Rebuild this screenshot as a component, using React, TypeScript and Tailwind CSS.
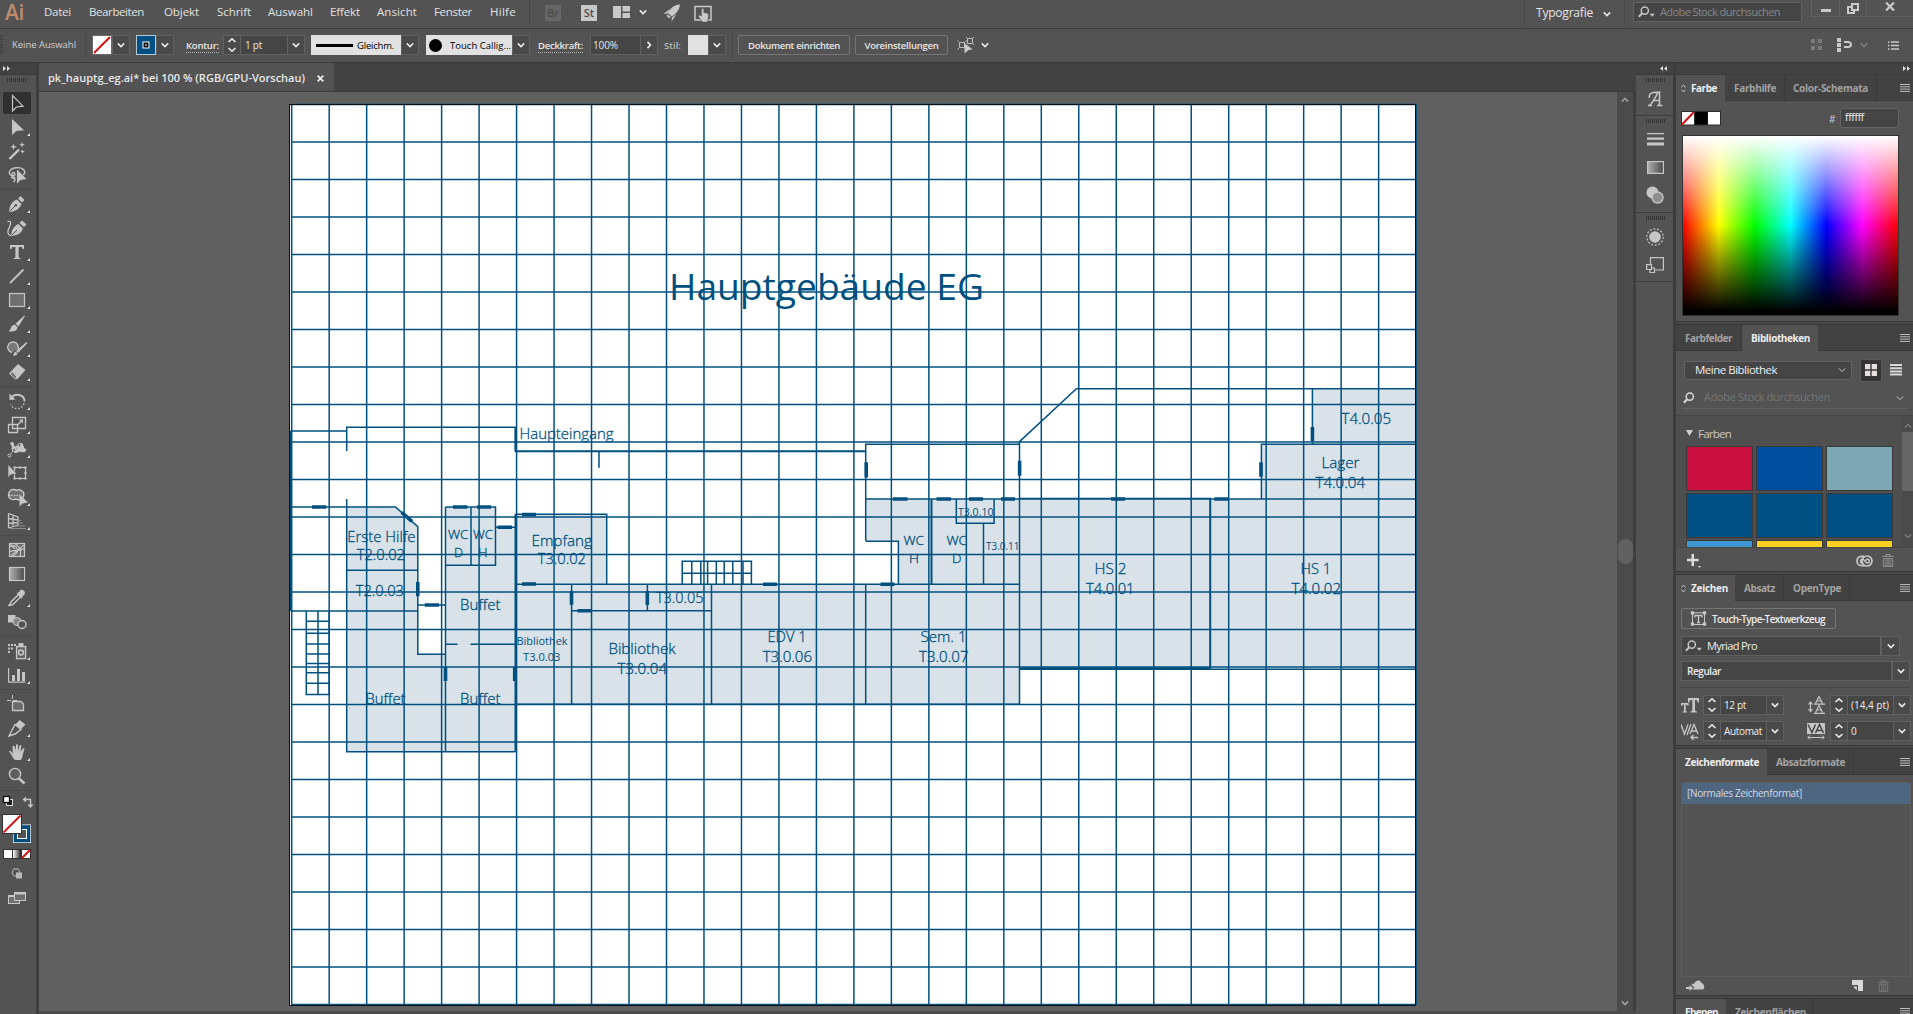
import React, { useLayoutEffect, useRef, useState } from "react";

const INK = "#00507f";

/** Single line of text whose tracking is adjusted so that it fills a given width. */
function Label({ w, children, className = "" }: { w: number; children: string; className?: string }) {
  const ref = useRef<HTMLSpanElement>(null);
  const [tracking, setTracking] = useState(0);
  useLayoutEffect(() => {
    const natural = ref.current!.getBoundingClientRect().width;
    setTracking((w - natural) / children.length);
  }, [w, children]);
  return (
    <span className={"block shrink-0 whitespace-nowrap " + className} style={{ width: w }}>
      <span ref={ref} style={{ letterSpacing: tracking }}>
        {children}
      </span>
    </span>
  );
}

function Chevron({ color = "#e8e8e8", s = 1.6, size = 8 }: { color?: string; s?: number; size?: number }) {
  return (
    <svg width={size} height={size} viewBox="0 0 8 8" fill="none" stroke={color} strokeWidth={s} className="shrink-0">
      <path d="M0.8 2.4 L4 5.6 L7.2 2.4" />
    </svg>
  );
}

function DropBtn({ className = "" }: { className?: string }) {
  return (
    <div className={"flex shrink-0 items-center justify-center border border-[#606060] bg-[#4a4a4a] " + className}>
      <Chevron />
    </div>
  );
}

function Stepper() {
  return (
    <div className="flex h-[20px] w-[18px] shrink-0 items-center justify-center border border-[#606060] bg-[#4a4a4a]">
      <svg width="10" height="16" viewBox="0 0 10 16" fill="none" stroke="#e8e8e8" strokeWidth="1.6">
        <path d="M1.5 5 L5 1.8 L8.5 5 M1.5 11 L5 14.2 L8.5 11" />
      </svg>
    </div>
  );
}

function Grip() {
  return (
    <div className="h-[4px] w-[19px] bg-[repeating-linear-gradient(90deg,#343434_0_1px,#535353_1px_2px)]" />
  );
}

function MenuIcon() {
  return (
    <svg width="10" height="8" viewBox="0 0 10 8" className="shrink-0" stroke="#bdbdbd" strokeWidth="1">
      <path d="M0 .5H10M0 2.8H10M0 5.1H10M0 7.4H10" />
    </svg>
  );
}

function UpDown() {
  return (
    <svg width="5" height="9" viewBox="0 0 5 9" fill="none" stroke="#c4c4c4" strokeWidth="1" className="shrink-0">
      <path d="M.5 3.4 L2.5 1 L4.5 3.4 M.5 5.6 L2.5 8 L4.5 5.6" />
    </svg>
  );
}

function Search({ arrow = false, color = "#c4c4c4" }: { arrow?: boolean; color?: string }) {
  return (
    <svg width="17" height="12" viewBox="0 0 17 12" fill="none" stroke={color} strokeWidth="1.5" className="shrink-0">
      <circle cx="6.8" cy="4.6" r="3.6" />
      <path d="M4.2 7.2 L.8 10.8" strokeWidth="2" />
      {arrow && <path d="M11.5 7.8 H17 L14.2 10.8 Z" fill={color} stroke="none" />}
    </svg>
  );
}

/* ------------------------------------------------------------------ */
/* Menu bar and control bar                                            */
/* ------------------------------------------------------------------ */

const MENU: [string, number, number][] = [
  ["Datei", 27, 45],
  ["Bearbeiten", 55, 75],
  ["Objekt", 35, 53],
  ["Schrift", 34, 51],
  ["Auswahl", 45, 62],
  ["Effekt", 30, 47],
  ["Ansicht", 40, 57],
  ["Fenster", 38, 56],
  ["Hilfe", 26, 39],
];

function MenuBar() {
  return (
    <div className="flex h-[28px] shrink-0 items-start">
      <div className="w-[44px] pl-[5px] text-[21px] leading-[24px] font-semibold tracking-[-0.3px] text-[#c08c6e]">Ai</div>
      <div className="flex h-[24px] items-center text-[11.5px] text-[#e2e2e2]">
        {MENU.map(([t, w, cell]) => (
          <div key={t} style={{ width: cell }}>
            <Label w={w}>{t}</Label>
          </div>
        ))}
      </div>
      <div className="h-[24px] w-[16px] border-l border-[#484848]" />
      <div className="mt-[5px] flex h-[16px] w-[16px] items-center justify-center bg-[#666] text-[11px] font-semibold text-[#4c4c4c]">Br</div>
      <div className="mt-[5px] ml-[20px] flex h-[16px] w-[16px] items-center justify-center bg-[#c9c9c9] text-[11px] font-semibold text-[#4c4c4c]">St</div>
      <svg className="mt-[6px] ml-[16px]" width="17" height="12" viewBox="0 0 17 12" fill="#c9c9c9">
        <path d="M0 0H8V12H0ZM9.5 0H17V5.5H9.5ZM9.5 7H17V12H9.5Z" />
      </svg>
      <div className="mt-[8px] ml-[9px]">
        <Chevron />
      </div>
      <svg className="mt-[4px] ml-[16px]" width="18" height="18" viewBox="0 0 18 18" fill="#c9c9c9">
        <path d="M17 .5 C11 1 7.5 4 5 9 L8.600 12.600 C13 10 16.500 6 17 .5Z M7 4.800 L.5 10 L4.500 9.500 Z M13.300 10.500 L8.500 17.500 L9 13.200 Z M4.500 10 L8 13.400 L5.800 14 L4 12.200Z" />
      </svg>
      <svg className="mt-[5px] ml-[13px]" width="18" height="17" viewBox="0 0 18 17">
        <path d="M1 1.500H17V15H1Z" fill="none" stroke="#c9c9c9" strokeWidth="1.500" />
        <path d="M7.500 4.500 C7.500 3 9.800 3 9.800 4.500 V7.500 L14 8.500 C14.800 8.800 14.700 11 14 14 L13.500 17 H8.500 L4.500 11.500 C4.300 9.800 6 9.800 7.500 11.200Z" fill="#c9c9c9" stroke="#535353" strokeWidth=".5" />
      </svg>
      <div className="grow" />
      <div className="flex h-[25px] w-[109px] shrink-0 items-center border-l border-[#484848] pl-[11px] text-[12px] text-[#e2e2e2]">
        <Label w={57}>Typografie</Label>
        <div className="mt-[3px] ml-[10px]">
          <Chevron />
        </div>
        <div className="ml-[13px] h-[24px] w-px bg-[#484848]" />
      </div>
      <div className="mt-[2px] flex h-[20px] w-[169px] shrink-0 items-center rounded-[2px] border border-[#636363] bg-[#454545] pl-[4px] text-[11px] text-[#858585]">
        <Search arrow />
        <Label w={120} className="ml-[5px]">Adobe Stock durchsuchen</Label>
      </div>
      <div className="ml-[9px] flex h-[17px] w-[102px] shrink-0 border-b border-l border-[#606060]">
        <div className="flex w-[28px] items-end justify-center border-r border-[#606060] pb-[4px]">
          <div className="h-[3px] w-[10px] bg-[#c9c9c9]" />
        </div>
        <div className="flex w-[27px] items-center justify-center border-r border-[#606060]">
          <svg width="12" height="11" viewBox="0 0 12 11" fill="none" stroke="#c9c9c9" strokeWidth="2">
            <path d="M5 1H11V7H5ZM4 4H1V10H7V8" />
          </svg>
        </div>
        <div className="flex grow items-center justify-center pb-[3px]">
          <svg width="10" height="9" viewBox="0 0 10 9" stroke="#c9c9c9" strokeWidth="2.200">
            <path d="M1 .5 L9 8.500 M9 .5 L1 8.500" />
          </svg>
        </div>
      </div>
    </div>
  );
}

function ControlBar() {
  return (
    <div className="flex h-[34px] shrink-0 items-center border-t border-[#3d3d3d] pb-[1px] text-[9.5px] text-[#e8e8e8]">
      <div className="h-[20px] w-[3px] shrink-0 bg-[repeating-linear-gradient(180deg,#3e3e3e_0_1px,#535353_1px_2px)]" />
      <Label w={64} className="ml-[9px] text-[9.5px] text-[#d0d0d0]">Keine Auswahl</Label>
      <div className="ml-[9px] h-[26px] w-px bg-[#484848]" />
      <svg width="20" height="20" viewBox="0 0 20 20" className="ml-[6px] shrink-0">
        <rect x=".5" y=".5" width="19" height="19" fill="#fff" stroke="#6a6a6a" />
        <path d="M2 18 L18 2" stroke="#cf1111" strokeWidth="2" />
      </svg>
      <DropBtn className="h-[20px] w-[18px]" />
      <svg width="20" height="20" viewBox="0 0 20 20" className="ml-[6px] shrink-0">
        <rect x=".5" y=".5" width="19" height="19" fill="#005083" stroke="#b5c9d6" />
        <rect x="7" y="7" width="6" height="6" fill="#111" stroke="#fff" />
        <path d="M9 10H11" stroke="#fff" />
      </svg>
      <DropBtn className="h-[20px] w-[18px]" />
      <div className="mt-[3px] ml-[12px] border-b border-dotted border-[#b5b5b5]">
        <Label w={33} className="leading-[12px] font-semibold">Kontur:</Label>
      </div>
      <div className="ml-[4px] flex">
        <Stepper />
        <div className="flex h-[20px] w-[46px] items-center border-y border-[#606060] bg-[#454545] pl-[4px]">
          <Label w={17} className="text-[10px]">1 pt</Label>
        </div>
        <DropBtn className="h-[20px] w-[18px]" />
      </div>
      <div className="ml-[6px] flex h-[20px] w-[90px] shrink-0 items-center bg-[#e1e1e1] text-black">
        <div className="ml-[5px] h-[3px] w-[37px] bg-black" />
        <Label w={37} className="mt-[3px] ml-[4px] font-medium">Gleichm.</Label>
      </div>
      <DropBtn className="h-[20px] w-[18px]" />
      <div className="ml-[7px] flex h-[20px] w-[86px] shrink-0 items-center bg-[#e1e1e1] text-black">
        <div className="ml-[3px] h-[13px] w-[13px] rounded-full bg-black" />
        <Label w={61} className="mt-[3px] ml-[8px] font-medium">Touch Callig...</Label>
      </div>
      <DropBtn className="h-[20px] w-[18px]" />
      <div className="mt-[3px] ml-[8px] border-b border-dotted border-[#b5b5b5]">
        <Label w={45} className="leading-[12px] font-semibold">Deckkraft:</Label>
      </div>
      <div className="ml-[7px] flex">
        <div className="flex h-[20px] w-[51px] items-center border border-[#606060] bg-[#454545] pl-[2px]">
          <Label w={25} className="text-[10px]">100%</Label>
        </div>
        <div className="flex h-[20px] w-[17px] items-center justify-center border border-l-0 border-[#606060] bg-[#4a4a4a]">
          <svg width="6" height="8" viewBox="0 0 6 8" fill="none" stroke="#e8e8e8" strokeWidth="1.700">
            <path d="M1.500 .8 L4.500 4 L1.500 7.200" />
          </svg>
        </div>
      </div>
      <Label w={17} className="mt-[2px] ml-[6px] font-semibold text-[#bdbdbd]">Stil:</Label>
      <div className="ml-[7px] h-[20px] w-[20px] shrink-0 bg-[#e1e1e1]" />
      <DropBtn className="h-[20px] w-[18px]" />
      <div className="ml-[6px] h-[26px] w-px bg-[#484848]" />
      <div className="ml-[5px] flex h-[20px] w-[112px] shrink-0 items-center justify-center rounded-[2px] border border-[#757575] pt-[2px]">
        <Label w={92} className="font-semibold">Dokument einrichten</Label>
      </div>
      <div className="ml-[5px] flex h-[20px] w-[93px] shrink-0 items-center justify-center rounded-[2px] border border-[#757575] pt-[2px]">
        <Label w={74} className="font-semibold">Voreinstellungen</Label>
      </div>
      <svg className="ml-[9px] shrink-0" width="18" height="18" viewBox="0 0 18 18" fill="none" stroke="#bdbdbd">
        <path d="M2.500 6.500H7.500V11.500H2.500ZM.5 4.500L2.500 6.500M.5 13.500L2.500 11.500M7.500 6.500L9.500 4.500M10.500 2.500H15.500V7.500H10.500ZM9 1L10.500 2.500M17 1L15.500 2.500M17 9L15.500 7.500" />
        <path d="M7.500 7 L15.500 13.500 L11.500 14 L7.500 17.500Z" fill="#c9c9c9" stroke="none" />
      </svg>
      <div className="ml-[6px]">
        <Chevron />
      </div>
      <div className="grow" />
      <svg className="mr-[14px] shrink-0" width="12" height="12" viewBox="0 0 12 12" fill="#7b7b7b">
        <path d="M0 0H4V4H0ZM7 0H11V4H7ZM0 7H4V11H0ZM7 7H11V11H7Z" />
        <path d="M0 5.500H12M5.500 0V12" stroke="#6a6a6a" strokeDasharray="1 1" />
      </svg>
      <svg className="mr-[8px] shrink-0" width="15" height="14" viewBox="0 0 15 14">
        <path d="M0 0H4V4H0ZM0 5H4V9H0ZM0 10H4V14H0Z" fill="#c9c9c9" />
        <path d="M7 4H11C15 4 15 9 11 9H7" stroke="#c9c9c9" strokeWidth="2" fill="none" />
      </svg>
      <div className="mr-[20px]">
        <Chevron color="#7b7b7b" />
      </div>
      <svg className="mr-[14px] shrink-0" width="11" height="9" viewBox="0 0 11 9" stroke="#c9c9c9" strokeWidth="1.500">
        <path d="M3 1H11M3 4.500H11M3 8H11M0 1H1.500M0 4.500H1.500M0 8H1.500" />
      </svg>
    </div>
  );
}

/* ------------------------------------------------------------------ */
/* Tool bar                                                            */
/* ------------------------------------------------------------------ */

const C = "#c6c6c6";
const TOOLS: { icon: React.ReactNode; more?: boolean; active?: boolean }[][] = [
  [
    { active: true, icon: <path d="M12.500 4.500 V20 L16.500 16 L23 15.200 Z" fill="none" stroke={C} strokeWidth="1.200" /> },
    { more: true, icon: <path d="M12 4 V20 L16.500 16 L24 15.200 Z" fill={C} /> },
    {
      icon: (
        <g fill={C}>
          <path d="M9.500 20 L19 10.500" stroke={C} strokeWidth="2.400" />
          <path d="M13.500 4.500 L14.400 6.900 L16.800 7.800 L14.400 8.700 L13.500 11.100 L12.600 8.700 L10.200 7.800 L12.600 6.900ZM22 3 L22.800 5 L25 5.800 L22.800 6.600 L22 8.800 L21.200 6.600 L19.200 5.800 L21.200 5ZM22.500 10.500 L23.200 12 L24.800 12.600 L23.200 13.200 L22.500 14.800 L21.800 13.200 L20.200 12.600 L21.800 12Z" />
        </g>
      ),
    },
    {
      icon: (
        <g>
          <path d="M14.500 12.500 C10 13.500 8.500 10 9.800 8 C12 4 21 3.500 24 7 C25.200 9 24.500 11 23 12 M14.500 12.500 C16 9.500 12.500 8.500 12 11 C12 13.500 15.500 14 15 17 L13.500 19 M11 14 L14 15.500" fill="none" stroke={C} strokeWidth="1.400" />
          <path d="M17 6.500 V20.500 L20.500 17 L26.500 16Z" fill={C} />
        </g>
      ),
    },
  ],
  [
    {
      more: true,
      icon: (
        <g>
          <path d="M9 20 C9.500 13 12 9.500 17 7.500 L21.500 12 C19.500 17 16 19.500 9 20Z M18 6.500 L20.500 4 L24.500 8 L22 10.500Z" fill={C} />
          <path d="M9.500 19.500 L15.500 13.500" stroke="#535353" />
          <circle cx="15.800" cy="13.200" r="1.200" fill="#535353" />
        </g>
      ),
    },
    {
      icon: (
        <g>
          <path d="M11 20 C11.500 13.500 14 10 18.500 8 L23 12.500 C21 17.500 17.500 19.500 11 20Z M19.500 7 L22 4.500 L26.500 8.500 L24 11Z" fill={C} />
          <path d="M11.500 19.500 L17 14" stroke="#535353" />
          <path d="M7.500 5.500 C14 4 8.500 12 8 15 C7.500 18 9 19.500 11 19.500" fill="none" stroke={C} strokeWidth="1.300" />
        </g>
      ),
    },
    { more: true, icon: <path d="M10 5 H24 V9 H22.500 C22.400 7.500 22 7 20.500 7 H18.600 V17 C18.600 17.700 19 17.900 20.500 18 V19 H13.500 V18 C15 17.900 15.400 17.700 15.400 17 V7 H13.500 C12 7 11.600 7.500 11.500 9 H10Z" fill={C} /> },
    { more: true, icon: <path d="M10 19 L23.500 5.500" stroke={C} strokeWidth="1.800" /> },
    { more: true, icon: <rect x="9.500" y="5.500" width="15" height="13" fill="#707070" stroke={C} strokeWidth="1.200" /> },
    { more: true, icon: <path d="M25 4 L18.500 14.500 L15.500 11.800 L24 3.800Z M14.800 12.500 L17.500 15 C17.500 18.500 14.500 20 8.500 19.500 C11 18 10.500 13 14.800 12.500Z" fill={C} /> },
    {
      more: true,
      icon: (
        <g>
          <path d="M12 16.500 A5.300 5.300 0 1 1 18 13" fill="#7a7a7a" stroke={C} strokeWidth="1.300" />
          <path d="M27.500 7 L18 17 L16 15 L26.500 6Z M15.500 15.500 L17.500 17.500 C16.500 19.500 14.500 20 13 19.500 C14 18.500 13.500 16.500 15.500 15.500Z" fill={C} />
        </g>
      ),
    },
    {
      more: true,
      icon: (
        <g>
          <path d="M9 13.500 L18 4 L25.500 10 L17 19.500Z" fill={C} />
          <path d="M10 14 L12.500 11.800 L17 17 L15.500 19Z" fill="#707070" stroke={C} />
        </g>
      ),
    },
  ],
  [
    {
      more: true,
      icon: (
        <g fill="none" stroke={C} strokeWidth="1.800">
          <path d="M11.500 8.500 C15 4 24.500 5 24.500 12.500" />
          <path d="M24 14.500 C22.500 20.500 13.500 21.500 10.500 15.500" strokeDasharray="1.500 1.800" strokeWidth="1.400" />
          <path d="M9.500 4.500 V11 L15.500 10.500Z" fill={C} stroke="none" />
        </g>
      ),
    },
    {
      more: true,
      icon: (
        <g fill="none" stroke={C} strokeWidth="1.300">
          <path d="M12.500 4.500H25.500V15.500H12.500ZM8.500 11.500H17.500V19.500H8.500Z M18 11.500L22 7.500" />
          <path d="M19 6.500H23V10.500Z" fill={C} stroke="none" />
        </g>
      ),
    },
    {
      more: true,
      icon: (
        <g>
          <path d="M10 7 C11 3.500 14.500 5 14 8 C15.500 12 18.500 6 21 6 C24.500 6 22 10.500 26.500 12.500 C25 17.500 21 14 19 15 C15 17.500 12.500 15.500 11.500 12 C12.500 9.500 11.500 8 10 7Z" fill={C} />
          <path d="M9 20 L13 14 L19 9" stroke={C} />
          <g fill="#535353" stroke={C}>
            <circle cx="9.500" cy="18.500" r="1.500" />
            <circle cx="14" cy="13" r="1.500" />
            <circle cx="19.500" cy="8" r="1.500" />
          </g>
        </g>
      ),
    },
    {
      icon: (
        <g>
          <rect x="14.500" y="6.500" width="11" height="11" fill="none" stroke={C} strokeWidth="1.200" />
          <path d="M13.500 5.500h2v2h-2zM19 5.500h2v2h-2zM24.500 5.500h2v2h-2zM24.500 11h2v2h-2zM24.500 16.500h2v2h-2zM19 16.500h2v2h-2zM13.500 16.500h2v2h-2z" fill={C} />
          <path d="M8 3.500 V16.500 L11 13.500 L17 13Z" fill={C} stroke="#535353" strokeWidth=".6" />
        </g>
      ),
    },
    {
      more: true,
      icon: (
        <g>
          <path d="M13 4.500 C15 4.500 16 5 16.500 5.500 C20 3.500 24.500 6.500 23.800 10.500 C23 15 18.500 15.500 16 14 C12 15.800 8.500 13.500 8.500 10 C8.500 7 10.500 4.500 13 4.500Z" fill="#707070" stroke={C} strokeWidth="1.400" />
          <path d="M9 10.500H20" stroke={C} strokeWidth="1.500" strokeDasharray="1.500 1" />
          <path d="M19.500 9.500 V21.500 L22.500 18.500 L28 17.500Z" fill={C} />
        </g>
      ),
    },
    {
      more: true,
      icon: (
        <g fill="none" stroke={C}>
          <path d="M8.500 4.500V19 M8.500 4.500 L18 8 V16 L8.500 19 M13 6.500V17.500 M8.500 9.500 L18 11 M8.500 14.500 L18 13.500" strokeWidth="1.300" />
          <path d="M18 11.500H21M17 14H23M12 17H25M9 19.500H26" stroke="#8a8a8a" />
        </g>
      ),
    },
  ],
  [
    {
      icon: (
        <g fill="none" stroke={C} strokeWidth="1.200">
          <rect x="9.500" y="5.500" width="15" height="13" fill="#656565" />
          <path d="M9.500 9C13 6 17 8 17.500 12S14 17 12.500 18.500M15 5.500C18 8 22 10 20 18.500M9.500 14C14 11 20 14 24.500 10M10 6L15 11M24 7L18 12L11 17.500" />
        </g>
      ),
    },
    { icon: <rect x="9.500" y="5.500" width="15" height="13" fill="url(#tool-grad)" stroke={C} strokeWidth="1.200" /> },
    {
      more: true,
      icon: (
        <g>
          <path d="M19 8 L11 16 C10.500 18 9.500 18.500 9 19.500 C11.500 19.500 12.500 19 13.500 18 L21 10.500" fill="none" stroke={C} strokeWidth="1.500" />
          <path d="M16.500 7 L18.500 6.500 L20.500 4 C23 3 26 5.500 24.500 8.500 L22.500 10.500 L22 12.500 L20.500 12Z" fill={C} />
        </g>
      ),
    },
    {
      icon: (
        <g>
          <path d="M8 5H15.500V12.500H8Z" fill={C} />
          <circle cx="17" cy="11.500" r="4" fill="#858585" stroke={C} />
          <circle cx="22" cy="14.500" r="4" fill="#535353" stroke={C} strokeWidth="1.400" />
        </g>
      ),
    },
  ],
  [
    {
      more: true,
      icon: (
        <g>
          <path d="M8 5h2v2h-2zM11 5h2v2h-2zM14 5h2v2h-2zM8 8.500h2v2h-2zM11 8.500h2v2h-2zM8 12h2v2h-2zM18.500 4H23.500V7H18.500Z" fill={C} />
          <rect x="16.600" y="7.600" width="9" height="12" fill="#606060" stroke={C} strokeWidth="1.400" />
          <circle cx="21" cy="13.500" r="2.400" fill="none" stroke={C} strokeWidth="1.600" />
        </g>
      ),
    },
    { more: true, icon: <path d="M8 5H9.200V18.500H25.500V19.700H8Z M12 12H15V18H12ZM17 6H20V18H17ZM22 9H25V18H22Z" fill={C} /> },
  ],
  [
    {
      icon: (
        <g fill="none" stroke={C}>
          <path d="M12.500 3V7M12.500 9V11M7 8.500H11M13 8.500H17" />
          <path d="M12.500 9.500H21L23.500 12V18.500H12.500Z" fill="#6a6a6a" strokeWidth="1.300" />
        </g>
      ),
    },
    {
      more: true,
      icon: (
        <g>
          <path d="M9 20 L15 8.500 L21 13.500 L15 18 Z" fill="none" stroke={C} strokeWidth="1.400" />
          <path d="M15.500 8.500 L19.500 4 L25.500 8.500 L21 13Z" fill={C} />
        </g>
      ),
    },
    { more: true, icon: <path d="M9 11 C10.500 10 12 12 13 14 L12.500 6.500 C13.200 5.200 14.500 5.500 14.700 6.500 L15.500 11 L16 5 C16.500 3.800 17.900 3.900 18 5 L18.200 11 L19.600 5.500 C20.200 4.600 21.400 5 21.300 6 L20.600 12 L22.800 8.500 C23.800 7.800 24.700 8.500 24.300 9.500 C22.500 14 22.500 19.500 20.500 20 H15 C13 18.500 11 14 9 11Z" fill={C} /> },
    {
      icon: (
        <g fill="none" stroke={C}>
          <circle cx="15" cy="10" r="5.600" strokeWidth="1.400" fill="#606060" />
          <path d="M19 14.500 L24.500 19.500" strokeWidth="2.600" />
        </g>
      ),
    },
  ],
];

function Separator() {
  return (
    <div className="flex h-[5px] w-full items-center">
      <div className="h-px w-[32px] bg-[#4a4a4a]" />
    </div>
  );
}

function ToolBar() {
  return (
    <div className="flex w-[39px] shrink-0 flex-col border-r-[3px] border-[#3e3e3e]">
      <svg className="h-0 w-0">
        <defs>
          <linearGradient id="tool-grad">
            <stop offset="0" stopColor="#b0b0b0" />
            <stop offset="1" stopColor="#4a4a4a" />
          </linearGradient>
        </defs>
      </svg>
      <div className="flex h-[12px] items-center border-b border-[#3a3a3a] bg-[#424242] pl-[3px]">
        <svg width="7" height="5" viewBox="0 0 7 5" fill="#e0e0e0">
          <path d="M0 0L3 2.500L0 5ZM4 0L7 2.500L4 5Z" />
        </svg>
      </div>
      <div className="mt-[3px] mb-[9px] pl-[7px]">
        <Grip />
      </div>
      {TOOLS.map((group, gi) => (
        <React.Fragment key={gi}>
          {group.map((t, i) => (
            <div key={i} className="flex h-[24px]">
              <svg width="36" height="24" viewBox="0 0 36 24">
                {t.active && <rect x="3" y="1" width="28" height="22" rx="2" fill="#303030" />}
                {t.icon}
                {t.more && <path d="M30 18V21H27Z" fill="#e0e0e0" />}
              </svg>
            </div>
          ))}
          <Separator />
        </React.Fragment>
      ))}
      <svg width="36" height="18" viewBox="0 0 36 18" className="mt-[-1px]">
        <rect x="6.500" y="7.500" width="6" height="6" fill="#222" stroke="#ddd" />
        <rect x="3.500" y="4.500" width="6" height="6" fill="#fff" stroke="#111" strokeWidth="1.300" />
        <path d="M25.500 7.500H30.500V13" fill="none" stroke={C} strokeWidth="1.400" />
        <path d="M26 4.500V10.500L22.500 7.500ZM27.500 12.500H33.500L30.500 16Z" fill={C} />
      </svg>
      <svg width="36" height="34" viewBox="0 0 36 34" className="mt-px">
        <rect x="13" y="13.500" width="18" height="18.500" fill="#fff" />
        <rect x="14" y="14.500" width="16" height="16.500" fill="#005083" stroke="#00375a" strokeWidth=".6" />
        <rect x="17.500" y="18.500" width="9" height="9" fill="#535353" stroke="#fff" />
        <rect x="2.500" y="3.500" width="19" height="19" fill="#fff" stroke="#333" />
        <path d="M3.500 21.500 L20.500 4.500" stroke="#cf1111" strokeWidth="1.800" />
      </svg>
      <svg width="36" height="10" viewBox="0 0 36 10" className="mt-[4px]">
        <rect x="3" y="0" width="28" height="10" fill="#333" />
        <rect x="4" y="1" width="8" height="8" fill="#fff" />
        <rect x="13" y="1" width="8" height="8" fill="url(#mini-grad)" />
        <rect x="22" y="1" width="8" height="8" fill="#fff" />
        <path d="M22 9L30 1" stroke="#cf1111" strokeWidth="2" />
        <defs>
          <linearGradient id="mini-grad">
            <stop offset="0" stopColor="#fff" />
            <stop offset="1" stopColor="#222" />
          </linearGradient>
        </defs>
      </svg>
      <svg width="36" height="14" viewBox="0 0 36 14" className="mt-[8px]">
        <circle cx="16" cy="5.500" r="3.700" fill="none" stroke="#9d9d9d" strokeWidth="1.400" />
        <rect x="16" y="5.500" width="6" height="6" fill="#b9b9b9" />
      </svg>
      <svg width="36" height="14" viewBox="0 0 36 14" className="mt-[10px]">
        <rect x="8.500" y="4.500" width="11" height="8" fill="#6f6f6f" stroke={C} />
        <rect x="14.500" y="1.500" width="11" height="8" fill="#6f6f6f" stroke={C} />
        <path d="M14 1H26V3.500H14ZM8 4H14V6H8Z" fill={C} />
      </svg>
    </div>
  );
}

/* ------------------------------------------------------------------ */
/* Drawing on the artboard                                             */
/* ------------------------------------------------------------------ */

const GRID = 37.5;
const GX = 291.7;
const GY = 104.3;

/* text, left, right, baseline, font size, weight */
const PLAN_LABELS: [string, number, number, number, number, number][] = [
  ["Haupteingang", 519.500, 613.500, 439, 15, 300],
  ["Erste Hilfe", 347.300, 415.500, 541.700, 15, 300],
  ["T2.0.02", 356.700, 405, 560.300, 15, 300],
  ["T2.0.03", 355.700, 404, 596, 15, 300],
  ["WC", 448, 468.500, 539.300, 12.600, 300],
  ["D", 454, 463, 557.300, 12.600, 300],
  ["WC", 473, 493, 539.300, 12.600, 300],
  ["H", 478, 487.500, 557.300, 12.600, 300],
  ["Empfang", 531.500, 592, 546, 15, 300],
  ["T3.0.02", 537.700, 586, 564, 15, 300],
  ["Buffet", 460, 500.500, 610, 15, 300],
  ["Buffet", 460, 500.500, 703.700, 15, 300],
  ["Buffet", 365.500, 405.500, 703.700, 15, 300],
  ["Bibliothek", 516.500, 567.500, 645, 11, 400],
  ["T3.0.03", 523, 560.500, 661, 11, 400],
  ["Bibliothek", 608.500, 675.500, 654, 15, 300],
  ["T3.0.04", 617.500, 667, 674, 15, 300],
  ["T3.0.05", 656, 703.500, 603, 15, 300],
  ["EDV 1", 767.500, 806.500, 642.300, 15, 300],
  ["T3.0.06", 762.700, 812, 661.700, 15, 300],
  ["Sem. 1", 920.500, 966.500, 642.300, 15, 300],
  ["T3.0.07", 919, 968.500, 661.700, 15, 300],
  ["WC", 903.500, 924, 545.300, 12.600, 300],
  ["H", 909, 919, 563.300, 12.600, 300],
  ["WC", 946.500, 967, 545.300, 12.600, 300],
  ["D", 952, 961.500, 563.300, 12.600, 300],
  ["T3.0.10", 958, 993.500, 516, 10.500, 400],
  ["T3.0.11", 986, 1019.500, 550.300, 10, 400],
  ["HS 2", 1094.500, 1126.500, 574, 15, 300],
  ["T4.0.01", 1086, 1134.500, 594, 15, 300],
  ["HS 1", 1300.500, 1331, 574, 15, 300],
  ["T4.0.02", 1291.500, 1341, 594, 15, 300],
  ["Lager", 1321.500, 1359.500, 468, 15, 300],
  ["T4.0.04", 1315.500, 1365, 488, 15, 300],
  ["T4.0.05", 1341.500, 1391, 424.300, 15, 300],
  ["Hauptgebäude EG", 669, 984, 300, 36, 400],
];

function Artboard() {
  return (
    <svg width="1578" height="919" viewBox="39 92 1578 919" className="block shrink-0">
      <rect x="289.500" y="104.500" width="1126" height="901" fill="#fff" stroke="#000" />
      <g fill="#d8e2e8">
        <path d="M346.700 507H395.500L417.800 526.700V654.300H445.500V751.700H346.700Z" />
        <path d="M445.500 507H495.500V527.300H515.500V751.700H445.500Z" />
        <path d="M515.500 514.300H606.700V584H898.400V541.200H865.700V499H1261.400V444.300H1312.400V388.700H1415.500V669H1019.500V704.300H515.500Z" />
      </g>
      <g fill="none" stroke={INK} strokeWidth="1.500">
        <path d="M290.700 431H346.700M346.700 451V427.300H515.300V451M346.700 499V751.700H515.500M445.500 507V751.700M346.700 570.300H417.800M291 611H417.800M291.500 507H395.500L417.800 526.700V654.300H445.500M417.800 605H445.500" />
        <path d="M445.500 565.300H495.500V507H445.500M471 507V565.300M495.500 527.300H515.500M445.500 644.300H457.500M470.500 644.300H515.500" />
        <path d="M515.500 514.300H606.700V584M515.500 584.200H1019.500M515.500 704.300H1019.500M571.600 584V704.300M571.600 610.700H711.400M647.400 584V610.700M711.500 584V704.300M865.700 584V704.300" />
        <path d="M599 451V467.700M865.700 541V444.300H1019.500M865.700 499H1019.500M865.700 541.200H898.400V584M956.300 499V523.300H994.100V499M983.500 523.300V584" />
        <path d="M1019.500 704.300V441.700L1076.400 388.700H1415M1312.400 388.700V444.300M1415 444.300H1261.400V499M1210 499H1415M1210 669.300H1415" />
        <path d="M306.300 611V694.500H329.200V611M318 611V694.500M306.300 621.300H329M306.300 633.300H329M306.300 644H329M306.300 654H329M306.300 663.500H329M306.300 672.700H329M306.300 683.300H329" />
        <path d="M682.200 584V561.300H751.400V584M682.200 573.300H751.400M691.800 561V584M700.800 561V584M707.600 561V584M716.300 561V584M724.200 561V584M732.800 561V584M743 561V584" />
      </g>
      <g fill="none" stroke={INK} strokeWidth="2">
        <path d="M291 431V611M515.700 427V451.300H865.700M515.500 514V751.700M931.500 499V584M1019.500 498.700H1210.200V668.500" />
        <path d="M1019.500 668.600H1210.200" strokeWidth="2.800" />
      </g>
      <path
        d="M312 507H326.300M401.700 512.300L412 521.300M417.800 582V596.300M424.800 605H439M453 507H467.400M477 507H491M497.500 527.300H512M445.500 667V681M514.700 667V681M522 514.500H536M522 584H536M571.500 591V604.700M577.500 610.700H591.500M647.300 591V605M763 584.200H777M880.500 584.200H894.600M893 499H907.500M936.600 499H951M969 499H983M1001 499H1015M866.200 462.300V477.500M1019.600 460.700V475.700M1312.400 427V441M1261 462.300V476.700M1111 499H1125M1214.400 499H1228.300"
        fill="none"
        stroke={INK}
        strokeWidth="3.600"
      />
      <g fill={INK} className="font-['Open_Sans']">
        {PLAN_LABELS.map(([t, x0, x1, y, size, weight], i) => (
          <text
            key={i}
            x={x0}
            y={y}
            fontSize={size}
            fontWeight={weight}
            stroke={INK}
            strokeWidth={weight === 300 ? 0.3 : 0}
            textLength={x1 - x0}
            lengthAdjust="spacingAndGlyphs"
          >
            {t}
          </text>
        ))}
      </g>
      <g stroke="#00507f" strokeWidth="1.500">
        {Array.from({ length: 31 }, (_, i) => (
          <line key={"v" + i} x1={GX + i * (GRID - 0.02)} x2={GX + i * (GRID - 0.02)} y1="104" y2="1005" />
        ))}
        {Array.from({ length: 25 }, (_, i) => (
          <line key={"h" + i} x1="291.500" x2="1416" y1={GY + i * GRID + 0.2} y2={GY + i * GRID + 0.2} />
        ))}
      </g>
      <path d="M289.500 1005.500V104.500H1415.500V1005.500H289.500" fill="none" stroke="#0a0f14" />
    </svg>
  );
}

function Document() {
  return (
    <div className="flex w-[1597px] shrink-0 flex-col">
      <div className="flex h-[29px] shrink-0 border-b border-[#3a3a3a] bg-[#424242]">
        <div className="flex h-[28px] w-[295px] items-center bg-[#535353] pt-[2px] pl-[9px] text-[11px] font-semibold text-[#e8e8e8]">
          <Label w={257}>pk_hauptg_eg.ai* bei 100 % (RGB/GPU-Vorschau)</Label>
          <svg className="ml-[12px]" width="7" height="7" viewBox="0 0 7 7" stroke="#e8e8e8" strokeWidth="1.900">
            <path d="M.7 .7L6.300 6.300M6.300 .7L.7 6.300" />
          </svg>
        </div>
      </div>
      <div className="flex h-[919px] shrink-0">
        <div className="w-[1578px] bg-[#606060]">
          <Artboard />
        </div>
        <div className="flex w-[16px] flex-col items-center justify-between bg-[#4b4b4b] py-[4px]">
          <svg width="8" height="8" viewBox="0 0 8 8" fill="none" stroke="#a0a0a0" strokeWidth="1.500">
            <path d="M.8 5.600L4 2.400L7.200 5.600" />
          </svg>
          <div className="mb-px h-[25px] w-[15px] rounded-full bg-[#616161]" />
          <Chevron color="#a0a0a0" />
        </div>
        <div className="w-[3px] bg-[#3e3e3e]" />
      </div>
      <div className="h-[3px] bg-[#4b4b4b]" />
    </div>
  );
}

/* ------------------------------------------------------------------ */
/* Icon dock                                                           */
/* ------------------------------------------------------------------ */

function IconDock() {
  return (
    <div className="flex w-[40px] shrink-0 flex-col border-r-[3px] border-[#3c3c3c]">
      <div className="flex h-[12px] items-center justify-end border-b border-[#3a3a3a] bg-[#424242] pr-[6px]">
        <svg width="7" height="5" viewBox="0 0 7 5" fill="#e0e0e0">
          <path d="M3 0L0 2.500L3 5ZM7 0L4 2.500L7 5Z" />
        </svg>
      </div>
      <div className="flex h-[41px] flex-col items-center border-b border-[#3e3e3e] pt-[3px] pl-px">
        <Grip />
        <svg className="mt-[9px]" width="17" height="16" viewBox="0 0 17 16" fill="none" stroke={C} strokeWidth="1.500">
          <path d="M2 14.500C5 14 9 5 11 1.500L12.500 1V14.500M10 14.500H15.500M1 14.500H5M6 9.500H13M2.500 7C1 2 6 1 11.500 1.200" />
        </svg>
      </div>
      <div className="flex h-[97px] flex-col items-center border-b border-[#3e3e3e] pt-[3px] pl-px">
        <Grip />
        <svg className="mt-[10px]" width="17" height="13" viewBox="0 0 17 13" fill={C}>
          <path d="M0 0H17V1.200H0ZM0 4.500H17V6.700H0ZM0 9.500H17V12.500H0Z" />
        </svg>
        <svg className="mt-[15px]" width="17" height="13" viewBox="0 0 17 13">
          <rect x=".6" y=".6" width="15.800" height="11.800" fill="url(#tool-grad)" stroke={C} strokeWidth="1.200" />
        </svg>
        <svg className="mt-[12px]" width="18" height="18" viewBox="0 0 18 18">
          <circle cx="6.500" cy="6.500" r="6" fill={C} />
          <circle cx="11.500" cy="11.500" r="5.500" fill="#8e8e8e" stroke={C} strokeWidth="1.400" />
        </svg>
      </div>
      <div className="flex h-[69px] flex-col items-center border-b border-[#3e3e3e] pt-[3px] pl-px">
        <Grip />
        <svg className="mt-[8px]" width="18" height="18" viewBox="0 0 18 18">
          <circle cx="9" cy="9" r="5.800" fill={C} />
          <circle cx="9" cy="9" r="8.200" fill="none" stroke={C} strokeWidth="1.200" strokeDasharray="2 1.680" />
        </svg>
        <svg className="mt-[11px]" width="18" height="17" viewBox="0 0 18 17" fill="none" stroke={C} strokeWidth="1.200">
          <path d="M4.500 7V.6H17.400V13H9.500M.6 7.600H5.500V12.500H.6ZM4 12.500V15.500H8.500V11H6" />
        </svg>
      </div>
    </div>
  );
}

/* ------------------------------------------------------------------ */
/* Panels                                                              */
/* ------------------------------------------------------------------ */

function Tab({ text, w, cell, pl, active = false, handle = false }: { text: string; w: number; cell: number; pl: number; active?: boolean; handle?: boolean }) {
  return (
    <div
      className={
        "flex h-[26px] shrink-0 items-center pt-px text-[10px] font-bold " +
        (active ? "bg-[#535353] text-[#ededed]" : "border-r border-b border-[#3a3a3a] text-[#a2a2a2]")
      }
      style={{ width: cell, paddingLeft: pl }}
    >
      {handle && (
        <div className="mr-[5px]">
          <UpDown />
        </div>
      )}
      <Label w={w}>{text}</Label>
    </div>
  );
}

function Tabs({ children }: { children: React.ReactNode }) {
  return (
    <div className="flex h-[26px] shrink-0 bg-[#424242]">
      {children}
      <div className="flex grow items-center justify-end border-b border-[#3a3a3a] pt-px pr-[3px]">
        <MenuIcon />
      </div>
    </div>
  );
}

function Gap() {
  return <div className="h-[4px] shrink-0 border-y border-[#383838] bg-[#474747]" />;
}

function ColorPanel() {
  return (
    <div className="flex h-[246px] shrink-0 flex-col">
      <Tabs>
        <Tab text="Farbe" w={26} cell={49} pl={5} active handle />
        <Tab text="Farbhilfe" w={42} cell={60} pl={9} />
        <Tab text="Color-Schemata" w={75} cell={92} pl={8} />
      </Tabs>
      <div className="mt-[7px] flex h-[20px] items-center pr-[14px] pl-[5px]">
        <svg width="40" height="15" viewBox="0 0 40 15">
          <rect width="40" height="14.500" fill="#2d2d2d" />
          <rect x="1" y="1" width="12" height="12.500" fill="#fff" />
          <path d="M1 13.500L13 1" stroke="#cf1111" strokeWidth="2" />
          <rect x="14" y="1" width="12.500" height="12.500" fill="#000" />
          <rect x="27" y="1" width="12" height="12.500" fill="#fff" />
        </svg>
        <div className="grow" />
        <Label w={7} className="mt-[2px] mr-[4px] text-[10px] text-[#d0d0d0]">#</Label>
        <div className="flex h-[20px] w-[59px] items-center rounded-[2px] border border-[#636363] bg-[#454545] pl-[4px] text-[10.5px] text-[#f0f0f0]">
          <Label w={19}>ffffff</Label>
        </div>
      </div>
      <div className="mt-[7px] ml-[6px] h-[181px] w-[217px] border border-[#333] bg-[linear-gradient(180deg,#fff_0%,rgba(255,255,255,0)_50%,rgba(0,0,0,0)_50%,#000_98%),linear-gradient(90deg,#f00_0%,#ff0_16.670%,#0f0_33.330%,#0ff_50%,#00f_66.670%,#f0f_83.330%,#f00_100%)]" />
    </div>
  );
}

function LibraryPanel() {
  return (
    <div className="flex h-[246px] shrink-0 flex-col">
      <Tabs>
        <Tab text="Farbfelder" w={47} cell={66} pl={9} />
        <Tab text="Bibliotheken" w={59} cell={76} pl={9} active />
      </Tabs>
      <div className="mt-[7px] flex h-[24px] items-center pl-[8px]">
        <div className="flex h-[19px] w-[168px] items-center justify-between rounded-[2px] border border-[#636363] bg-[#454545] pr-[5px] pl-[10px] text-[11.5px] text-[#efefef]">
          <Label w={82}>Meine Bibliothek</Label>
          <Chevron s={1} color="#c9c9c9" />
        </div>
        <div className="ml-[8px] flex h-[23px] w-[22px] items-center justify-center rounded-[2px] border border-[#5a5a5a] bg-[#353535]">
          <svg width="12" height="12" viewBox="0 0 12 12" fill="#e6dfe0">
            <path d="M0 0H5.300V5.300H0ZM6.700 0H12V5.300H6.700ZM0 6.700H5.300V12H0ZM6.700 6.700H12V12H6.700Z" />
          </svg>
        </div>
        <svg className="ml-[8px]" width="12" height="12" viewBox="0 0 12 12" fill="#d8d8d8">
          <path d="M0 0H12V2H0ZM0 3.200H12V5.200H0ZM0 6.400H12V8.400H0ZM0 9.600H12V11.600H0Z" />
        </svg>
      </div>
      <div className="mr-[5px] ml-[7px] flex h-[27px] items-center border-b border-[#606060] pt-[5px] pr-[4px]">
        <Search color="#d8d8d8" />
        <Label w={126} className="ml-[4px] text-[11px] text-[#757575]">Adobe Stock durchsuchen</Label>
        <div className="grow" />
        <Chevron s={1} color="#c9c9c9" />
      </div>
      <div className="mt-[6px] flex h-[132px] shrink-0 justify-between border-t border-[#464646] bg-[#4f4f4f]">
        <div className="overflow-hidden pl-[10px]">
          <div className="flex h-[29px] items-center gap-[5px] pt-[6px] text-[11.5px] text-[#c9c9c9]">
            <svg width="7" height="7" viewBox="0 0 7 7" fill="#d0d0d0">
              <path d="M0 0H7L3.500 6Z" />
            </svg>
            <Label w={33}>Farben</Label>
          </div>
          <div className="mt-px grid grid-cols-[67px_67px_67px] gap-x-[3px] gap-y-[2px]">
            <div className="h-[45px] border border-[#3a3a3a] bg-[#cb1141]" />
            <div className="h-[45px] border border-[#3a3a3a] bg-[#004f9f]" />
            <div className="h-[45px] border border-[#3a3a3a] bg-[#7ea8b4]" />
            <div className="h-[45px] border border-[#3a3a3a] bg-[#005083]" />
            <div className="h-[45px] border border-[#3a3a3a] bg-[#005083]" />
            <div className="h-[45px] border border-[#3a3a3a] bg-[#005083]" />
            <div className="h-[45px] border border-[#3a3a3a] bg-[#3d97d3]" />
            <div className="h-[45px] border border-[#3a3a3a] bg-[#fdd021]" />
            <div className="h-[45px] border border-[#3a3a3a] bg-[#fdd021]" />
          </div>
        </div>
        <div className="flex w-[11px] flex-col items-center bg-[#4b4b4b] pt-[6px]">
          <svg width="8" height="8" viewBox="0 0 8 8" fill="none" stroke="#a0a0a0">
            <path d="M.8 5.600L4 2.400L7.200 5.600" />
          </svg>
          <div className="mt-[2px] h-[59px] w-[11px] bg-[#666]" />
          <div className="mt-[41px]">
            <Chevron s={1} color="#a0a0a0" />
          </div>
        </div>
      </div>
      <div className="flex grow items-center border-t border-[#464646] pt-[2px] pl-[11px]">
        <svg width="14" height="14" viewBox="0 0 14 14" fill="#dcdcdc">
          <path d="M4.500 0H7V4.700H11.500V7.200H7V12H4.500V7.200H0V4.700H4.500ZM11 12H14L12.500 14Z" />
        </svg>
        <svg className="ml-[155px]" width="17" height="12" viewBox="0 0 17 12" fill="none" stroke="#c9c9c9" strokeWidth="1.700">
          <circle cx="11" cy="6" r="5" />
          <path d="M8 1.300H5.500C-.5 1.300 -.5 10.700 5.500 10.700H8" />
          <path d="M7 8C4 9 3.500 4.500 6.500 4.200C8.500 4.200 9 8 11.500 8C14 8 14 4.200 11.500 4.200C10.500 4.200 10 4.800 9.500 5.500" strokeWidth="1.400" />
        </svg>
        <svg className="ml-[9px]" width="12" height="13" viewBox="0 0 12 13" fill="none" stroke="#8a8a8a" strokeWidth="1.200">
          <path d="M0 2.500H12M4 2V.6H8V2M1.500 4.500H10.500V12.400H1.500ZM4 5V12M6 5V12M8 5V12" />
        </svg>
      </div>
    </div>
  );
}

function Field({ text, w }: { text: string; w: number }) {
  return (
    <div className="flex h-[20px] w-[45px] items-center overflow-hidden border-y border-[#606060] bg-[#454545] pl-[3px] text-[10px] text-[#ededed]">
      <Label w={w}>{text}</Label>
    </div>
  );
}

function CharacterPanel() {
  return (
    <div className="flex h-[170px] shrink-0 flex-col">
      <Tabs>
        <Tab text="Zeichen" w={37} cell={59} pl={5} active handle />
        <Tab text="Absatz" w={31} cell={49} pl={9} />
        <Tab text="OpenType" w={48} cell={66} pl={9} />
      </Tabs>
      <div className="mt-[7px] ml-[5px] flex h-[21px] w-[155px] shrink-0 items-center rounded-[2px] border border-[#757575] pl-[8px] text-[10px] font-semibold text-[#ededed]">
        <svg width="17" height="15" viewBox="0 0 17 15" fill="none" stroke={C}>
          <path d="M2.500 2V13M14.500 2V13M2.500 1.800H14.500M2.500 13.500H14.500" />
          <path d="M5 4.500H12M8.500 4.500V11.500M7 11.500H10M5 4V6.500M12 4V6.500" strokeWidth="1.300" />
          <g fill={C} stroke="none">
            <circle cx="2.500" cy="2" r="1.900" />
            <circle cx="14.500" cy="2" r="1.900" />
            <circle cx="2.500" cy="13" r="1.900" />
            <circle cx="14.500" cy="13" r="1.900" />
          </g>
        </svg>
        <Label w={113} className="mt-px ml-[5px]">Touch-Type-Textwerkzeug</Label>
      </div>
      <div className="mt-[7px] ml-[5px] flex h-[20px] shrink-0">
        <div className="flex w-[200px] items-center border border-[#606060] bg-[#454545] pl-[3px] text-[11px] text-[#ededed]">
          <Search arrow />
          <Label w={50} className="ml-[5px]">Myriad Pro</Label>
        </div>
        <DropBtn className="h-[20px] w-[19px]" />
      </div>
      <div className="mt-[5px] ml-[5px] flex h-[20px] shrink-0">
        <div className="flex w-[211px] items-center border border-[#606060] bg-[#454545] pt-px pl-[5px] text-[10px] font-semibold text-[#ededed]">
          <Label w={34}>Regular</Label>
        </div>
        <DropBtn className="h-[20px] w-[18px]" />
      </div>
      <div className="mt-[6px] mr-[3px] ml-[5px] h-px shrink-0 bg-[#474747]" />
      <div className="mt-[7px] ml-[5px] flex h-[20px] shrink-0 items-center">
        <svg width="18" height="15" viewBox="0 0 18 15" fill={C}>
          <path d="M7 0H18V4.500H16.800C16.500 2.500 16 2 14 2V12C14 13 14.500 13.300 16 13.500V14.500H9.500V13.500C11 13.300 11.300 13 11.300 12V2C9 2 8.500 2.500 8.200 4.500H7ZM0 5H7.500V8H6.700C6.600 7 6.200 6.500 4.700 6.500V12.500C4.700 13.300 5 13.500 6 13.500V14.500H1.800V13.500C2.800 13.500 3 13.300 3 12.500V6.500C1.500 6.500 1 7 .8 8H0Z" />
        </svg>
        <div className="ml-[4px] flex">
          <Stepper />
          <Field text="12 pt" w={22} />
          <DropBtn className="h-[20px] w-[18px]" />
        </div>
        <svg className="ml-[24px]" width="17" height="18" viewBox="0 0 17 18" fill="none" stroke={C} strokeWidth="1.200">
          <path d="M2.500 6.500V15M.5 8.500L2.500 6L4.500 8.500M.5 13L2.500 15.500L4.500 13M7.500 7.500L11 .5L14.500 7.500M8.500 5H13.500M6 8.200H17M7.500 16.500L11 9.500L14.500 16.500M8.500 14H13.500M6 17.400H17" />
        </svg>
        <div className="ml-[5px] flex">
          <Stepper />
          <Field text="(14,4 pt)" w={38} />
          <DropBtn className="h-[20px] w-[18px]" />
        </div>
      </div>
      <div className="mt-[6px] ml-[5px] flex h-[20px] shrink-0 items-center">
        <svg width="18" height="17" viewBox="0 0 18 17" fill="none" stroke={C} strokeWidth="1.300">
          <path d="M0 1.500L3.500 11L7 1.500M10 1L6 12M9 11L13 1.500L17 11M10.500 8H15.500M17 14.500H10M12.500 12L10 14.500L12.500 17" />
        </svg>
        <div className="ml-[4px] flex">
          <Stepper />
          <Field text="Automat" w={38} />
          <DropBtn className="h-[20px] w-[18px]" />
        </div>
        <svg className="ml-[23px]" width="18" height="17" viewBox="0 0 18 17">
          <rect width="18" height="11" fill={C} />
          <path d="M1 1.500L5 9.500L8.500 1.500M8.500 10L12.500 1.500L16.500 10M10 7.500H15" stroke="#454545" strokeWidth="1.500" fill="none" />
          <path d="M1 14.500H17M3 12.500L1 14.500L3 16.500M15 12.500L17 14.500L15 16.500" stroke={C} fill="none" />
        </svg>
        <div className="ml-[5px] flex">
          <Stepper />
          <Field text="0" w={6} />
          <DropBtn className="h-[20px] w-[18px]" />
        </div>
      </div>
    </div>
  );
}

function StylesPanel() {
  return (
    <div className="flex h-[246px] shrink-0 flex-col">
      <Tabs>
        <Tab text="Zeichenformate" w={74} cell={91} pl={9} active />
        <Tab text="Absatzformate" w={69} cell={87} pl={9} />
      </Tabs>
      <div className="mt-[7px] mr-[2px] ml-[5px] h-[195px] shrink-0 border border-[#5d5d5d]">
        <div className="flex h-[21px] items-center bg-[#4f6680] pl-[5px] text-[10px] font-medium text-[#d4dbe2]">
          <Label w={115}>[Normales Zeichenformat]</Label>
        </div>
      </div>
      <div className="flex grow items-center pb-[1px] pl-[10px]">
        <svg width="19" height="13" viewBox="0 0 19 13" fill={C}>
          <path d="M6 10.500L8.500 8.500L5.500 6C6 5 7 4.500 8.500 4.500C9.500 .5 15 .5 15.500 4C19 5 19 10.500 16.500 10.500ZM0 8H3.500V6L7 9L3.500 12V10H0Z" />
        </svg>
        <svg className="ml-[147px]" width="11" height="11" viewBox="0 0 11 11" fill="#d8d8d8">
          <path d="M0 0H11V11H6V5H0ZM1 6.500H4.800V10.300Z" />
        </svg>
        <svg className="ml-[15px]" width="11" height="12" viewBox="0 0 12 13" fill="none" stroke="#6f6f6f" strokeWidth="1.200">
          <path d="M0 2.500H12M4 2V.6H8V2M1.500 4.500H10.500V12.400H1.500ZM4 5V12M6 5V12M8 5V12" />
        </svg>
      </div>
    </div>
  );
}

function PanelDock() {
  return (
    <div className="flex w-[237px] shrink-0 flex-col overflow-hidden">
      <div className="flex h-[12px] shrink-0 items-center justify-end border-b border-[#3a3a3a] bg-[#424242] pr-[3px]">
        <svg width="7" height="5" viewBox="0 0 7 5" fill="#e0e0e0">
          <path d="M0 0L3 2.500L0 5ZM4 0L7 2.500L4 5Z" />
        </svg>
      </div>
      <ColorPanel />
      <Gap />
      <LibraryPanel />
      <Gap />
      <CharacterPanel />
      <Gap />
      <StylesPanel />
      <Gap />
      <Tabs>
        <Tab text="Ebenen" w={33} cell={50} pl={9} active />
        <Tab text="Zeichenflächen" w={71} cell={87} pl={9} />
      </Tabs>
    </div>
  );
}

export default function App() {
  return (
    <div className="flex h-[1014px] w-[1913px] flex-col overflow-hidden bg-[#535353] font-['Open_Sans',sans-serif] leading-normal">
      <MenuBar />
      <ControlBar />
      <div className="flex h-[952px] shrink-0 overflow-hidden border-t border-[#3a3a3a]">
        <ToolBar />
        <Document />
        <IconDock />
        <PanelDock />
      </div>
    </div>
  );
}
